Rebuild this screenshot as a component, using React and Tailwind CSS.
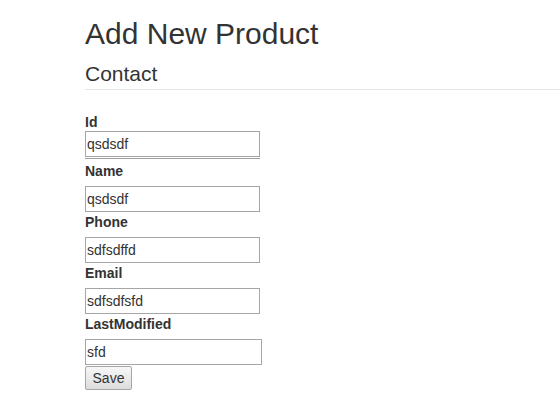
import React from "react";

function Field({ label, value, width = "w-[175px]", first = false }) {
  return (
    <div className="flex flex-col">
      <label className="block h-[20px] text-[14px] leading-[20px] font-bold">{label}</label>
      <input
        readOnly
        value={value}
        className={`${first ? "mt-[-1px]" : "mt-[5px]"} ${width} h-[26px] border border-[#a6a6a6] bg-white px-[1px] text-[14px] text-[#333] outline-none`}
      />
    </div>
  );
}

export default function App() {
  return (
    <div className="min-h-[402px] bg-white pl-[85px] pt-[17px] text-[#333]" style={{ fontFamily: '"Liberation Sans", Arial, sans-serif' }}>
      <h2 className="text-[30px] leading-[33px] font-normal">Add New Product</h2>
      <div className="mt-[9px] text-[21px] leading-[30px] border-b border-[#e5e5e5]">Contact</div>
      <div className="mt-[22px] flex flex-col">
        <Field label="Id" value="qsdsdf" first />
        <div className="mt-[1px] h-px w-[175px] bg-[#a0a0a0]" />
        <div className="mt-[2px] flex flex-col">
          <Field label="Name" value="qsdsdf" />
          <Field label="Phone" value="sdfsdffd" />
          <Field label="Email" value="sdfsdfsfd" />
          <Field label="LastModified" value="sfd" width="w-[177px]" />
        </div>
        <button className="mt-[1px] h-[24px] w-[47px] rounded-[2px] border border-[#a6a6a6] bg-gradient-to-b from-[#f7f7f7] to-[#dcdcdc] text-[14px] leading-[20px] text-[#333]">
          Save
        </button>
      </div>
    </div>
  );
}
